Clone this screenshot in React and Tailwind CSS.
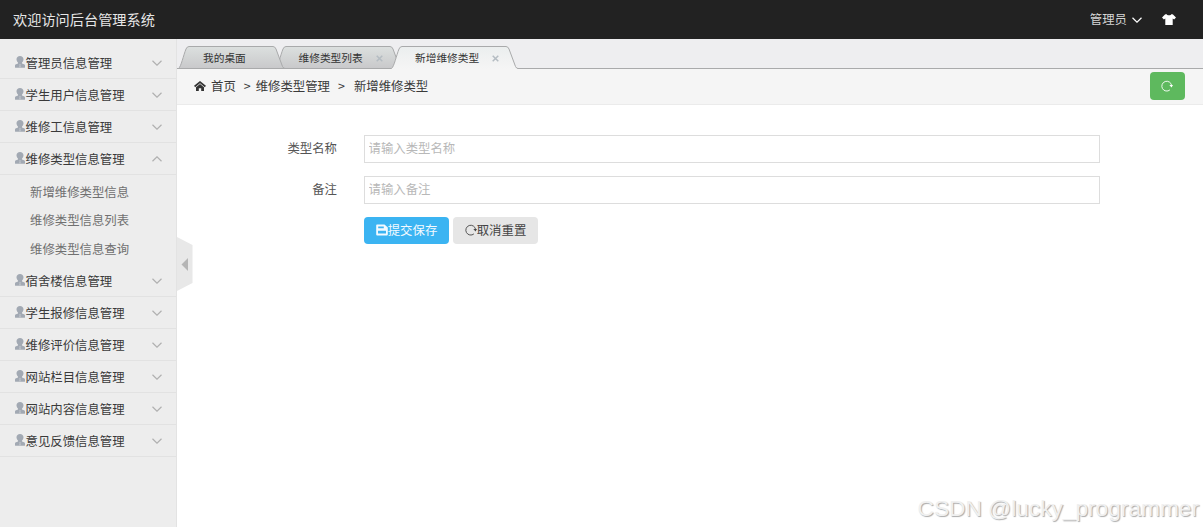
import { clsx } from 'clsx'

const MENU = [
  { title: '管理员信息管理' },
  { title: '学生用户信息管理' },
  { title: '维修工信息管理' },
  {
    title: '维修类型信息管理',
    items: ['新增维修类型信息', '维修类型信息列表', '维修类型信息查询'],
  },
  { title: '宿舍楼信息管理' },
  { title: '学生报修信息管理' },
  { title: '维修评价信息管理' },
  { title: '网站栏目信息管理' },
  { title: '网站内容信息管理' },
  { title: '意见反馈信息管理' },
]

const TABS = [
  { title: '我的桌面', width: 107, className: 'w-[107px] pl-[25px] z-10' },
  { title: '维修类型列表', width: 127, className: 'w-[127px] -ml-[10px] pl-[23.500px]', closable: true },
  { title: '新增维修类型', width: 127, className: 'w-[127px] -ml-[11px] pl-[24px] z-20', closable: true, active: true },
]

function Chevron({ up, className }) {
  return (
    <svg viewBox="0 0 10 6" className={className} fill="none" stroke="currentColor" strokeWidth="1.200">
      <path d={up ? 'M.5 5.2 5 .8l4.5 4.4' : 'M.5.8 5 5.2 9.5.8'} />
    </svg>
  )
}

function UserIcon() {
  return (
    <svg viewBox="0 0 10 12" className="mb-px h-3 w-2.5 shrink-0 text-[#a2a9b3]" fill="currentColor">
      <path d="M5 0C2.900 0 1.500 1.300 1.500 3.200c0 1.300.7 2.500 1.500 3.300v1L1 8.300C.3 8.600 0 9 0 9.800v1.400c0 .4.3.6.7.6h8.600c.4 0 .7-.2.7-.6V9.800c0-.8-.3-1.200-1-1.500l-2-.8v-1c.8-.8 1.500-2 1.500-3.300C8.500 1.300 7.100 0 5 0Z" />
      <path d="m4.600 8.500.4-.4.4.4-.2.7.2 1.700-.4.5-.4-.5.2-1.700Z" fill="#e4e6e9" />
    </svg>
  )
}

function ReloadIcon({ className }) {
  return (
    <svg viewBox="0 0 12 12" className={className}>
      <path d="M8.900 9.900A4.900 4.900 0 1 1 10.600 5.600" fill="none" stroke="currentColor" strokeWidth=".9" />
      <path d="M8.400 5.100h3.600l-1.500 2.300Z" fill="currentColor" />
    </svg>
  )
}

function Tab({ tab }) {
  const w = tab.width
  const outline = `M.5 22.500C3 21 5.500 9 8 3Q9 .5 11 .5H${w - 12}Q${w - 10} .5 ${w - 9} 3L${w - 2.5} 20.500Q${w - 1.5} 22.500 ${w} 22.500`
  const gradient = `tab-${w}-${tab.active ? 'on' : 'off'}`
  return (
    <li className={clsx('relative flex h-[23px] shrink-0 items-center', tab.className)}>
      <svg viewBox={`0 0 ${w} 23`} className="absolute inset-0 h-full w-full">
        <defs>
          <linearGradient id={gradient} x1="0" y1="0" x2="0" y2="1">
            <stop offset="0" stopColor={tab.active ? '#ebeeee' : '#dce0df'} />
            <stop offset="1" stopColor={tab.active ? '#f5f5f5' : '#c8c8ca'} />
          </linearGradient>
        </defs>
        <path d={`${outline}V23H.5Z`} fill={`url(#${gradient})`} />
        <path d={outline} fill="none" stroke="#a9aaab" />
        {!tab.active && <path d={`M0 22.500H${w}`} stroke="#a9aaab" />}
      </svg>
      <span className="relative pt-px text-[10.700px] leading-none text-[#333]">{tab.title}</span>
      {tab.closable && (
        <svg viewBox="0 0 7 7" className="relative mt-px ml-[13px] size-[7px] text-[#b4bcc2]" stroke="currentColor" strokeWidth="1.500">
          <path d="m.7.7 5.600 5.600M6.300.7.7 6.300" />
        </svg>
      )}
    </li>
  )
}

function Sidebar() {
  return (
    <aside className="w-[177px] shrink-0 border-r border-[#e3e3e3] bg-[#ededed] pt-2">
      {MENU.map((group) => (
        <dl key={group.title}>
          <dt className="flex h-8 items-center border-b border-[#e2e2e2] pr-[14px] pl-[14.500px] text-[#3a3a3a]">
            <UserIcon />
            <span className="ml-[1px] flex-1 pt-px leading-none">{group.title}</span>
            <Chevron up={Boolean(group.items)} className="h-[6px] w-[10px] text-[#b0b0b0]" />
          </dt>
          {group.items && (
            <dd className="h-[90px] pt-[3px]">
              <ul>
                {group.items.map((item) => (
                  <li key={item} className="flex h-[28.400px] items-center pl-[30px] text-[#707070]">
                    {item}
                  </li>
                ))}
              </ul>
            </dd>
          )}
        </dl>
      ))}
    </aside>
  )
}

function Field({ label, placeholder }) {
  return (
    <div className="mb-[13px] flex h-7 items-center">
      <label className="w-[160px] pb-[2px] text-right leading-none text-[#555]">{label}</label>
      <input
        type="text"
        placeholder={placeholder}
        className="ml-[27px] h-7 w-[736px] border border-[#ddd] px-[3.500px] pb-[2px] placeholder:text-[#b8b8b8]"
      />
    </div>
  )
}

export default function App() {
  return (
    <div className="relative flex h-[527px] w-[1203px] flex-col overflow-hidden bg-white font-['Noto_Sans_CJK_SC',sans-serif] text-[12.400px] text-[#3a3a3a]">
      <header className="flex h-[39px] shrink-0 items-center bg-[#222] pl-[13px] text-white">
        <h1 className="flex-1 text-[14.200px] leading-none text-[#e6e6e6]">欢迎访问后台管理系统</h1>
        <span className="leading-none text-[#d5d5d5]">管理员</span>
        <Chevron className="mt-px ml-[5px] h-[6px] w-[10px]" />
        <svg viewBox="0 0 14 11" className="mr-[27px] ml-[20px] h-[11px] w-[14px]" fill="currentColor">
          <path d="M4.300 0C5 1.800 9 1.800 9.700 0L11 .4l3 3-1.900 2-1.400-1V11H3.300V4.400l-1.400 1L0 3.400l3-3Z" />
        </svg>
      </header>

      <div className="flex min-h-0 flex-1">
        <Sidebar />

        <main className="relative min-w-0 flex-1">
          <div className="flex h-[30px] items-end border-b border-[#a9aaab] bg-[#eeeef0]">
            <ul className="-mb-px flex pl-px">
              {TABS.map((tab) => (
                <Tab key={tab.title} tab={tab} />
              ))}
            </ul>
          </div>

          <nav className="flex h-9 items-center border-b border-[#ebebeb] bg-[#f5f5f5] pr-[18px] pb-px pl-[17px] leading-none">
            <svg viewBox="0 0 12 10" className="h-[10px] w-3 text-[#333]">
              <path d="M.6 5.500 6 1.100l5.400 4.400" fill="none" stroke="currentColor" strokeWidth="1.700" />
              <path d="M2 6.200 6 3l4 3.200V10H7.200V7.200H4.800V10H2Z" fill="currentColor" />
            </svg>
            <span className="ml-[5px]">首页</span>
            <span className="ml-[8px]">&gt;</span>
            <span className="ml-[5px]">维修类型管理</span>
            <span className="ml-[8px]">&gt;</span>
            <span className="ml-[9px] flex-1">新增维修类型</span>
            <button className="flex h-7 w-[35.500px] items-center justify-center rounded-[4px] bg-[#5eb95e] text-white">
              <ReloadIcon className="size-3" />
            </button>
          </nav>

          <form className="pt-[30px]">
            <Field label="类型名称" placeholder="请输入类型名称" />
            <Field label="备注" placeholder="请输入备注" />
            <div className="flex gap-1 pl-[187px] leading-none">
              <button type="button" className="flex h-[27px] w-[85px] items-center justify-center rounded-[4px] bg-[#3bb4f2] text-[#f4faff]">
                <svg viewBox="0 0 12 12" className="mb-px size-3" fill="currentColor">
                  <path fillRule="evenodd" d="M1 .5h7.500L11.800 3.500v7q0 1-1 1H1.200q-1 0-1-1v-9q0-1 .8-1ZM2.200 2.500v1.700h5.600V2.500ZM2 6.700v2.800h8V6.700Z" />
                </svg>
                提交保存
              </button>
              <button type="button" className="flex h-[27px] w-[85px] items-center justify-center rounded-[4px] bg-[#e6e6e6] text-[#444]">
                <ReloadIcon className="mb-px size-3" />
                取消重置
              </button>
            </div>
          </form>

          {/* sidebar collapse handle */}
          <svg viewBox="0 0 16 54" className="absolute top-[198px] left-0 h-[54px] w-4">
            <path d="M0 0 15.500 8V46L0 54Z" fill="#e8e8e8" />
            <path d="M4.500 27.500 11 21v13Z" fill="#b5b5b5" />
          </svg>
        </main>
      </div>

      <div className="absolute right-[4px] bottom-[5px] font-['Liberation_Sans',sans-serif] text-[22.700px] leading-[28px] whitespace-nowrap text-[#f0f0f0] [text-shadow:1px_1px_1px_#aaa]">
        CSDN @lucky_programmer
      </div>
    </div>
  )
}
